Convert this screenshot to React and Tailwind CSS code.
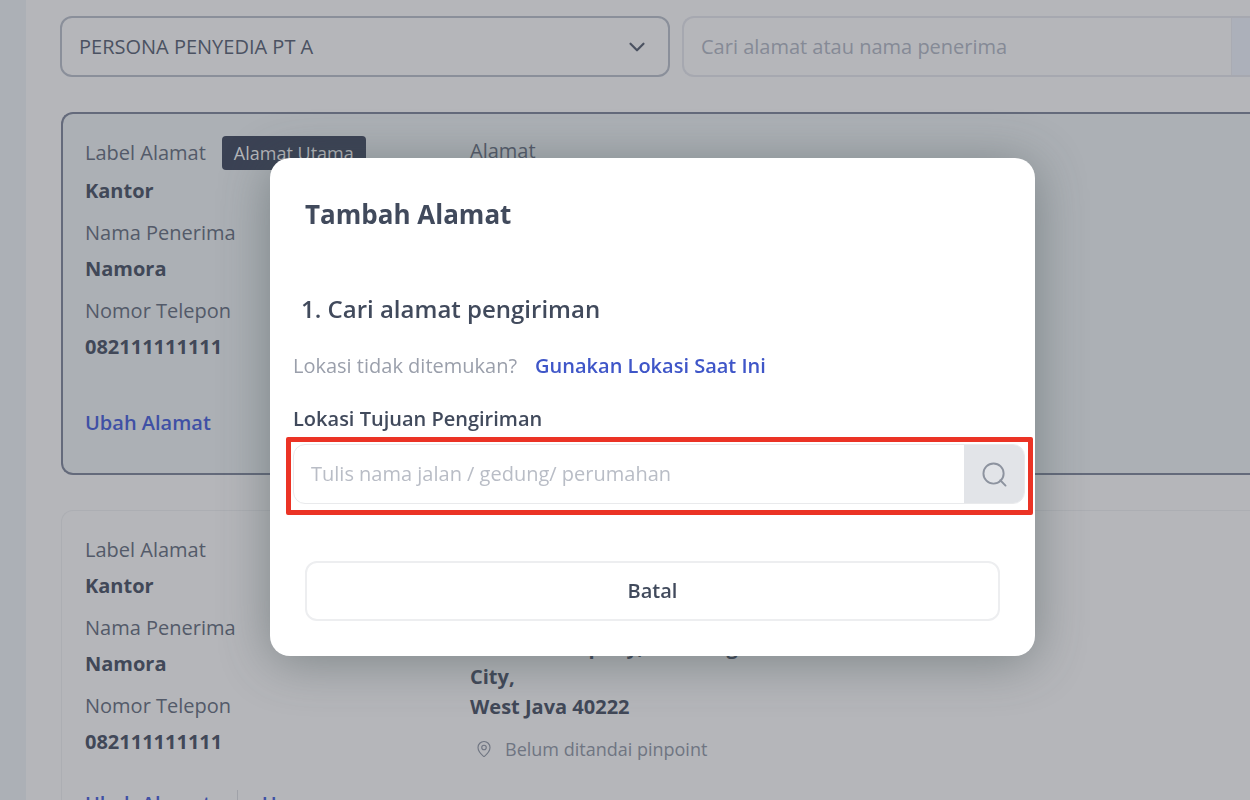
import { ChevronDown, MapPin } from "lucide-react";

const Field = ({ label, value, badge }) => (
  <div>
    <dt className={badge ? "flex h-10 items-center gap-4" : "flex h-9 items-center"}>
      {label}
      {badge && (
        <span className="flex h-[34px] items-center rounded bg-[#3b4254] px-3 text-lg font-medium text-[#b5b6ba]">
          {badge}
        </span>
      )}
    </dt>
    <dd className="flex h-9 items-center font-bold text-[#414858]">{value}</dd>
  </div>
);

const AddressInfo = ({ badge }) => (
  <dl className="flex flex-col gap-[6px]">
    <Field label="Label Alamat" value="Kantor" badge={badge} />
    <Field label="Nama Penerima" value="Namora" />
    <Field label="Nomor Telepon" value="082111111111" />
  </dl>
);

const Modal = () => (
  <div className="fixed inset-0 flex items-start justify-center pt-[158px] pl-[55px]">
    <section
      role="dialog"
      aria-labelledby="modal-title"
      className="w-[765px] rounded-[20px] bg-white pt-9 pb-[35px] text-[#414a5c] shadow-[0_6px_50px_rgba(60,75,75,0.45)]"
    >
      <h2 id="modal-title" className="px-[35px] text-[26px] leading-10 font-bold">
        Tambah Alamat
      </h2>
      <h3 className="mt-[57px] px-[31px] text-2xl leading-9 font-semibold">1. Cari alamat pengiriman</h3>
      <p className="mt-[23px] flex gap-[18px] px-[23px] leading-8 text-[#9a9fab]">
        Lokasi tidak ditemukan?
        <a href="#lokasi" className="font-semibold text-[#3f56c8]">
          Gunakan Lokasi Saat Ini
        </a>
      </p>
      <label htmlFor="lokasi" className="mt-[21px] mb-[2px] block px-[23px] leading-8 font-semibold">
        Lokasi Tujuan Pengiriman
      </label>
      {/* Kotak merah di sekitar input pencarian */}
      <div className="mr-[2px] ml-4 rounded-[2px] border-[5px] border-[#eb3325] pt-[2px] pr-[3px] pb-[6px] pl-[2px]">
        <form className="flex h-[60px] overflow-hidden rounded-xl border border-[#e9eaec]">
          <input
            id="lokasi"
            placeholder="Tulis nama jalan / gedung/ perumahan"
            className="min-w-0 flex-1 px-[17px] outline-none placeholder:text-[#b9bdc6]"
          />
          <button type="button" aria-label="Cari" className="flex w-[60px] items-center justify-center bg-[#e2e4e8] text-[#8d939f]">
            <svg width="25" height="25" viewBox="0 0 26 26" fill="none" stroke="currentColor" strokeWidth="2" strokeLinecap="round">
              <circle cx="12" cy="12" r="10.5" />
              <path d="M19 19l5.5 5.5" />
            </svg>
          </button>
        </form>
      </div>
      <div className="mt-[46px] px-[35px]">
        <button type="button" className="h-[60px] w-full rounded-xl border-2 border-[#edeef0] font-semibold">
          Batal
        </button>
      </div>
    </section>
  </div>
);

const App = () => {
  return (
    <div className="flex h-screen overflow-hidden bg-[#b5b6ba] font-['Open_Sans',sans-serif] text-xl text-[#535a69]">
      <aside className="w-[26px] shrink-0 bg-[#acb0b6]" />
      <main className="min-w-0 flex-1 pt-4 pl-[34px]">
        <div className="flex gap-3">
          <div className="relative w-[610px] shrink-0">
            <select
              aria-label="Persona"
              className="h-[61px] w-full appearance-none rounded-xl border-2 border-[#8a8f9a] px-[17px] text-[#4b5262]"
            >
              <option>PERSONA PENYEDIA PT A</option>
            </select>
            <ChevronDown size={26} className="pointer-events-none absolute top-[18px] right-5 text-[#4b5261]" />
          </div>
          <div className="flex h-[61px] min-w-0 flex-1 overflow-hidden rounded-l-xl border-2 border-r-0 border-[#a6a8b0]">
            <input
              aria-label="Cari alamat"
              placeholder="Cari alamat atau nama penerima"
              className="min-w-0 flex-1 px-[17px] outline-none placeholder:text-[#858a96]"
            />
            <div className="w-[19px] border-l border-[#a9abb3] bg-[#acb0ba]" />
          </div>
        </div>

        <article className="mt-[35px] ml-px flex rounded-l-xl border-2 border-r-0 border-[#646a7b] bg-[#acb0b5] pt-[19px] pb-8 pl-[22px]">
          <div className="w-[385px] shrink-0">
            <AddressInfo badge="Alamat Utama" />
            <a href="#ubah" className="mt-10 block leading-9 font-semibold text-[#3f50a5]">
              Ubah Alamat
            </a>
          </div>
          <div className="leading-9">Alamat</div>
        </article>

        <article className="mt-[35px] ml-px flex rounded-l-xl border border-r-0 border-[#acaeb3] pt-[21px] pb-8 pl-[23px]">
          <div className="w-[385px] shrink-0">
            <AddressInfo />
            <div className="mt-[30px] flex leading-7 font-semibold text-[#3f50a5]">
              <a href="#ubah" className="border-r border-[#a0a2a9] pr-[26px]">
                Ubah Alamat
              </a>
              <a href="#hapus" className="pl-6">
                Hapus
              </a>
            </div>
          </div>
          <div>
            <div className="leading-9">Alamat</div>
            <p className="mt-16 leading-[30px] font-bold text-[#414858]">
              Kantor Company, Bandung
              <br />
              City,
              <br />
              West Java 40222
            </p>
            <p className="mt-3 flex items-center gap-3 pl-[5px] text-lg leading-[30px] font-medium text-[#6f7582]">
              <MapPin size={18} strokeWidth={1.5} />
              Belum ditandai pinpoint
            </p>
          </div>
        </article>
      </main>
      <Modal />
    </div>
  );
};

export default App;
